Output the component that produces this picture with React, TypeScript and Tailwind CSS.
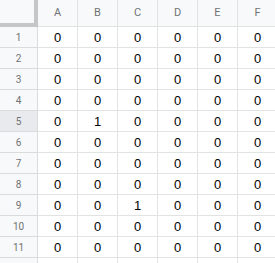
import React from 'react';

const COLUMNS = ['A', 'B', 'C', 'D', 'E', 'F'];

// cell values, row by row
const ROWS: number[][] = Array.from({ length: 11 }, (_, r) =>
  COLUMNS.map((_, c) => {
    if (r === 4 && c === 1) return 1;
    if (r === 8 && c === 2) return 1;
    return 0;
  })
);

export default function App() {
  return (
    <div className="h-[263px] w-[275px] overflow-hidden bg-white">
      <div className="grid w-max grid-cols-[38px_repeat(6,40px)] auto-rows-[21px] [grid-template-rows:27px]">
        {/* Corner */}
        <div className="h-[27px] border-r-4 border-b-4 border-[#c4c7c5] bg-[#f8f9fa]" />

        {/* Column headers */}
        {COLUMNS.map((col) => (
          <div
            key={col}
            className="flex h-[27px] items-center justify-center border-r border-b border-[#e1e3e1] bg-[#f8f9fa] pt-[1px] text-[11px] text-[#6f7274] [font-family:Roboto,sans-serif]"
          >
            {col}
          </div>
        ))}

        {ROWS.map((row, r) => (
          <React.Fragment key={r}>
            <div
              className={`flex h-[21px] items-center justify-center border-r border-b border-[#dadcdb] text-[10px] text-[#6f7274] [font-family:Roboto,sans-serif] ${
                r === 4 ? 'bg-[#e8eaed]' : 'bg-[#f8f9fa]'
              }`}
            >
              {r + 1}
            </div>
            {row.map((v, c) => (
              <div
                key={c}
                className="flex h-[21px] items-center justify-center border-r border-b border-[#e2e3e3] pt-[1px] text-[13px] text-black [font-family:'Liberation_Sans',Arial,sans-serif]"
              >
                {v}
              </div>
            ))}
          </React.Fragment>
        ))}

        {/* next row, cut off by the window */}
        <div className="h-[21px] border-r border-[#dadcdb] bg-[#f8f9fa]" />
        {COLUMNS.map((col) => (
          <div key={col} className="h-[21px] border-r border-[#e2e3e3]" />
        ))}
      </div>
    </div>
  );
}
